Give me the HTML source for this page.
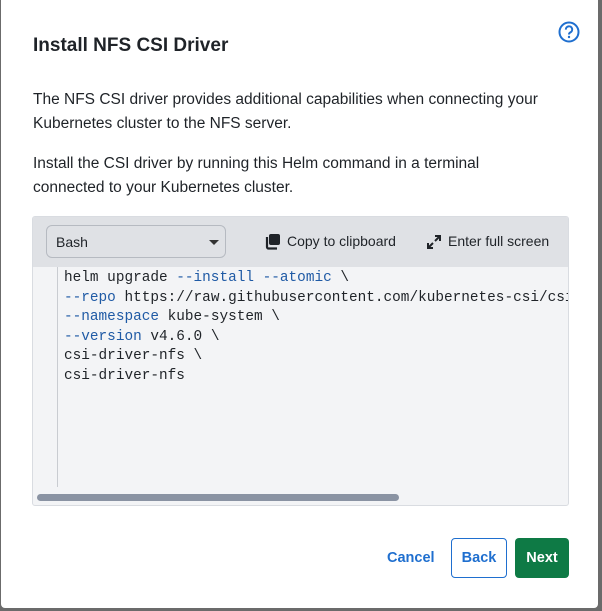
<!DOCTYPE html>
<html><head><style>
*{box-sizing:border-box;margin:0;padding:0}
body{width:602px;height:611px;background:#6b6b6b;font-family:"Liberation Sans",Arial,sans-serif;position:relative;overflow:hidden}
.dlg{position:absolute;left:1px;top:0;width:597px;height:608px;background:#fff;border-radius:0 0 4px 4px}
.t{position:absolute;left:32px;top:35px;font-size:19px;font-weight:bold;color:#1f2328}
.help{position:absolute;left:557px;top:21px}
p{position:absolute;left:32px;font-size:15.5px;line-height:24px;color:#1f2328}
.box{position:absolute;left:31px;top:216px;width:537px;height:290px;border:1px solid #d9dce1;border-radius:3px;background:#f3f4f6;overflow:hidden}
.hd{height:50px;background:#dfe1e5;position:relative}
.sel{position:absolute;left:13px;top:8px;width:180px;height:33px;border:1px solid #b6bac1;border-radius:6px;font-size:14px;color:#1f2328;padding:8px 0 0 9px}
.sel:after{content:"";position:absolute;right:6px;top:14px;border:5px solid transparent;border-top:5px solid #333}
.btn{position:absolute;top:16px;font-size:14px;color:#1f2328}
.gut{position:absolute;left:24px;top:50px;bottom:18px;border-left:1px solid #c9ccd1}
pre{position:absolute;left:31px;top:52px;font-family:"Liberation Mono",monospace;font-size:14.4px;line-height:19.6px;color:#1f2328}
.k{color:#1f5aa5}
.sb{position:absolute;left:4px;top:277px;width:362px;height:7px;border-radius:4px;background:#8a93a3}
.cancel{position:absolute;left:386px;top:550px;font-size:14.5px;font-weight:bold;color:#1f6fcf}
.back{position:absolute;left:450px;top:538px;width:56px;height:40px;border:1px solid #1f6fcf;border-radius:4px;color:#1f6fcf;font-size:14.5px;font-weight:bold;text-align:center;line-height:38px}
.next{position:absolute;left:514px;top:538px;width:54px;height:40px;background:#0e7a45;border-radius:4px;color:#fff;font-size:14.5px;font-weight:bold;text-align:center;line-height:40px}
</style></head><body>
<div class="dlg">
<div class="t">Install NFS CSI Driver</div>
<svg class="help" width="22" height="22" viewBox="0 0 22 22"><circle cx="11" cy="11" r="9.5" fill="none" stroke="#1f6fcf" stroke-width="2"/><path d="M7.8 8.6a3.2 3.2 0 1 1 4.6 2.8c-1 .5-1.4 1.1-1.4 2.1" fill="none" stroke="#1f6fcf" stroke-width="2"/><circle cx="11" cy="16" r="1.2" fill="#1f6fcf"/></svg>
<p style="top:88px">The NFS CSI driver provides additional capabilities when connecting your<br>Kubernetes cluster to the NFS server.</p>
<p style="top:152px">Install the CSI driver by running this Helm command in a terminal<br>connected to your Kubernetes cluster.</p>
<div class="box">
<div class="hd">
<div class="sel">Bash</div>
<svg style="position:absolute;left:231px;top:16px" width="17" height="17" viewBox="0 0 17 17"><rect x="5" y="1" width="11" height="11" rx="2" fill="#1f2328"/><path d="M3 4v10a1.5 1.5 0 0 0 1.5 1.5H13" fill="none" stroke="#1f2328" stroke-width="2.2"/></svg>
<div class="btn" style="left:254px">Copy to clipboard</div>
<svg style="position:absolute;left:393px;top:17px" width="16" height="16" viewBox="0 0 16 16"><path d="M9 2h5v5M14 2l-5 5M7 14H2V9M2 14l5-5" fill="none" stroke="#1f2328" stroke-width="2"/></svg>
<div class="btn" style="left:415px">Enter full screen</div>
</div>
<div class="gut"></div>
<pre>helm upgrade <span class="k">--install</span> <span class="k">--atomic</span> \
<span class="k">--repo</span> https://raw.githubusercontent.com/kubernetes-csi/csi
<span class="k">--namespace</span> kube-system \
<span class="k">--version</span> v4.6.0 \
csi-driver-nfs \
csi-driver-nfs</pre>
<div class="sb"></div>
</div>
<div class="cancel">Cancel</div>
<div class="back">Back</div>
<div class="next">Next</div>
</div>
</body></html>
